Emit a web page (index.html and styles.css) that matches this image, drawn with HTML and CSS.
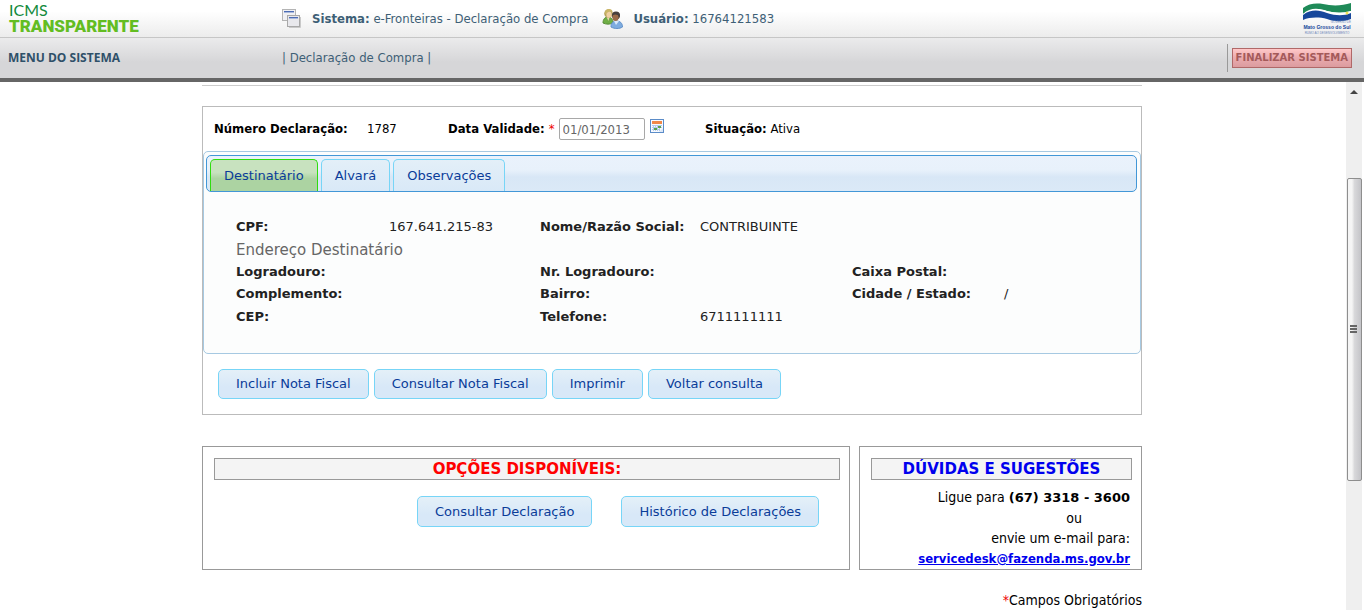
FILE: index.html
```html
<!DOCTYPE html>
<html lang="pt-BR">
<head>
<meta charset="utf-8">
<title>ICMS Transparente - Declaração de Compra</title>
<link rel="stylesheet" href="styles.css">
</head>
<body>
<header class="top">
  <div class="logo"><span class="logo-small">ICMS</span><span class="logo-big">TRANSPARENTE</span></div>
  <div class="session">
    <svg class="icon-windows" width="20" height="20" viewBox="0 0 20 20" aria-hidden="true">
      <rect x="1.500" y=".5" width="13" height="11" fill="#f0f0f3" stroke="#b4b4b4"/>
      <rect x="3" y="2" width="10" height="1" fill="#4c6cb4"/><rect x="3" y="3" width="10" height="1" fill="#a9b9dc"/>
      <path d="M19.500 8v10.500H8" stroke="#c9c9c9" fill="none"/>
      <rect x="6.500" y="6.500" width="12" height="11" fill="#e8e8ec" stroke="#a8a8a8"/>
      <rect x="8" y="8" width="9" height="1" fill="#4c6cb4"/><rect x="8" y="9" width="9" height="1" fill="#a9b9dc"/>
    </svg>
    <span class="session-item"><b>Sistema:</b> e-Fronteiras - Declaração de Compra</span>
    <svg class="icon-users" width="22" height="22" viewBox="0 0 22 22" aria-hidden="true">
      <path d="M1 15c0-4 2-6 5-6s5 2 5 6c-3 1.500-7 1.500-10 0z" fill="#6fae45" stroke="#568c36"/>
      <path d="M4.500 9h3l-1 4z" fill="#e9d3b0"/>
      <circle cx="6.500" cy="5.500" r="4.300" fill="#b7a35c"/>
      <ellipse cx="7" cy="6.500" rx="2.600" ry="3.300" fill="#f0cfa4"/>
      <path d="M3 6c0-4 2-5 4-5s3.500 1 3.500 3C8 3 6 4 5 5z" fill="#cbb667"/>
      <path d="M9 19c0-4 2-6 5.500-6s6 2 6 6c-3 2-8 2-11.500 0z" fill="#7eacdf" stroke="#6292ca"/>
      <path d="M12 13h5l-3 4z" fill="#d9e9fa"/>
      <circle cx="14" cy="7.500" r="4" fill="#4f4037"/>
      <ellipse cx="13.500" cy="9.500" rx="3" ry="3.500" fill="#9a6a48"/>
      <path d="M10 7c1-4 7-4 8 0v2c-2-3-5-3-8-2z" fill="#46403f"/>
    </svg>
    <span class="session-item"><b>Usuário:</b> 16764121583</span>
  </div>
  <svg class="state-logo" width="50" height="32" viewBox="0 0 50 32" role="img" aria-label="Governo de Mato Grosso do Sul">
    <path d="M1 5C8-1 18 0 27 2c8 1 15 0 22-2v8c-8 3-16 2-24 0C16 5 8 6 1 11z" fill="#1f8a58"/>
    <path d="M1 11c7-7 16-6 24-3 8 2 16 2 24 0v2c-8 3-16 3-24 0-8-3-17-3-24 3z" fill="#fff"/>
    <path d="M1 12c8-6 16-5 24-2 9 3 17 3 24 0v6c-8 3-16 3-24 0-8-2-17-2-24 1z" fill="#17479b"/>
    <circle cx="45" cy="10" r="1.500" fill="#f2e255"/>
    <text x="49" y="20" class="state-tiny" text-anchor="end">GOVERNO DE</text>
    <text x="25" y="26" class="state-name" text-anchor="middle">Mato Grosso do Sul</text>
    <text x="25" y="31" class="state-tiny" text-anchor="middle">RUMO AO DESENVOLVIMENTO</text>
  </svg>
</header>
<nav class="menu">
  <b class="menu-title">MENU DO SISTEMA</b>
  <span class="crumbs">| <a href="#declaracao">Declaração de Compra</a> |</span>
  <div class="exit"><button class="exit-button" type="button">FINALIZAR SISTEMA</button></div>
</nav>
<div class="viewport">
  <main class="page" id="declaracao">
    <section class="panel">
      <div class="summary">
        <b>Número Declaração:</b><span>1787</span>
        <div class="validity"><label for="validade">Data Validade:</label><span class="required">*</span>
          <input id="validade" class="date" type="text" value="01/01/2013">
          <button class="calendar" type="button" aria-label="Abrir calendário">
            <svg width="14" height="14" viewBox="0 0 14 14" aria-hidden="true">
              <rect x=".5" y=".5" width="13" height="13" fill="#f7faff" stroke="#5b8cc8"/>
              <rect x="2" y="2" width="10" height="3" fill="#f08848"/>
              <path d="M2 6.500h10M2 8.500h10M2 10.500h7M3.500 6v6M5.500 6v6M7.500 6v6M9.500 6v6" stroke="#b3caea" fill="none"/>
              <path d="M8 7h3v2H8zM4 9h3v2H4z" fill="#5aa34c"/>
              <path d="M9 13l4-4v4z" fill="#dbe7f7"/>
            </svg>
          </button>
        </div>
        <div><b>Situação:</b> Ativa</div>
      </div>
      <div class="tabs">
        <div class="tab-bar" role="tablist">
          <button class="tab tab-active" type="button" role="tab" aria-selected="true">Destinatário</button>
          <button class="tab" type="button" role="tab" aria-selected="false">Alvará</button>
          <button class="tab" type="button" role="tab" aria-selected="false">Observações</button>
        </div>
        <div class="fields">
          <b>CPF:</b><span>167.641.215-83</span><b>Nome/Razão Social:</b><span class="wide">CONTRIBUINTE</span>
          <h2 class="fields-heading">Endereço Destinatário</h2>
          <b>Logradouro:</b><span></span><b>Nr. Logradouro:</b><span></span><b>Caixa Postal:</b><span></span>
          <b>Complemento:</b><span></span><b>Bairro:</b><span></span><b>Cidade / Estado:</b><span>/</span>
          <b>CEP:</b><span></span><b>Telefone:</b><span class="wide">6711111111</span>
        </div>
      </div>
      <div class="actions">
        <button class="button" type="button">Incluir Nota Fiscal</button>
        <button class="button" type="button">Consultar Nota Fiscal</button>
        <button class="button" type="button">Imprimir</button>
        <button class="button" type="button">Voltar consulta</button>
      </div>
    </section>
    <div class="bottom">
      <section class="box">
        <h2 class="box-title options-title">OPÇÕES DISPONÍVEIS:</h2>
        <div class="options">
          <button class="button" type="button">Consultar Declaração</button>
          <button class="button" type="button">Histórico de Declarações</button>
        </div>
      </section>
      <section class="box">
        <h2 class="box-title help-title">DÚVIDAS E SUGESTÕES</h2>
        <div class="help">
          <p>Ligue para <b class="phone">(67) 3318 - 3600</b></p>
          <p class="or">ou</p>
          <p>envie um e-mail para:</p>
          <p><a class="mail" href="mailto:servicedesk@fazenda.ms.gov.br">servicedesk@fazenda.ms.gov.br</a></p>
        </div>
      </section>
    </div>
    <p class="note"><span class="required">*</span>Campos Obrigatórios</p>
  </main>
  <div class="scroll" aria-hidden="true">
    <svg class="arrow" width="8" height="4" viewBox="0 0 8 4"><path d="M0 4l4-4 4 4z" fill="#444"/></svg>
    <div class="thumb"><svg width="8" height="9" viewBox="0 0 8 9"><path d="M0 1h7M0 4h7M0 7h7" stroke="#666" stroke-width="2"/></svg></div>
  </div>
</div>
</body>
</html>
```
FILE: styles.css
```css
* { box-sizing: border-box; }
body {
  margin: 0;
  min-height: 100vh;
  display: flex;
  flex-direction: column;
  background: #fff;
  color: #000;
  font: 13px/20px "DejaVu Sans Condensed", "DejaVu Sans", Verdana, sans-serif;
}
button, input { font: inherit; margin: 0; }
p, h2 { margin: 0; }

.top {
  display: grid;
  grid-template-columns: 281px 1fr auto;
  height: 38px;
  padding-right: 12px;
  border-bottom: 1px solid #c6c6c6;
  background: linear-gradient(#fff 30%, #ececec);
  color: #3e5f76;
}
.logo { display: flex; flex-direction: column; padding: 3px 0 0 9px; }
.logo-small { font: 16px/14px Lato, sans-serif; color: #128a3c; }
.logo-big { font: 900 17px/18px Roboto, sans-serif; color: #63bd22; }
.session { display: flex; align-items: center; }
.session-item { white-space: nowrap; }
.icon-windows { margin-right: 11px; }
.icon-users { margin: 0 9px 0 14px; }
.state-logo { margin-top: 3px; }
.state-name { font: bold 5px "Liberation Sans", sans-serif; fill: #17479b; }
.state-tiny { font: 3px "Liberation Sans", sans-serif; fill: #6d86b8; }

.menu {
  display: grid;
  grid-template-columns: 274px 1fr auto;
  align-items: center;
  height: 44px;
  padding: 0 12px 0 8px;
  border-bottom: 4px solid #666;
  background: linear-gradient(#ebebec, #d6d6d8 60%);
  color: #3e5f76;
}
.menu-title { font: bold 12px/20px "Open Sans", sans-serif; color: #2f5069; }
.crumbs a { color: inherit; text-decoration: none; }
.exit { padding: 4px 0 4px 4px; border-left: 1px solid #999; }
.exit-button {
  display: block;
  height: 20px;
  padding: 0 3px;
  border: 1px solid #b06868;
  background: linear-gradient(#ffc8c8, #e9aaae 50%, #dc9c9f);
  color: #a45a5a;
  font: bold 10px/18px "DejaVu Sans", Verdana, sans-serif;
  white-space: nowrap;
}

.viewport { flex: 1; display: grid; grid-template-columns: 1fr 20px; }
.page { width: 100%; max-width: 940px; margin: 3px auto 0; border-top: 1px solid #ccc; }
.panel { margin-top: 20px; padding-bottom: 15px; border: 1px solid #bbb; }
.summary {
  display: grid;
  grid-template-columns: 153px 81px 257px 1fr;
  align-items: center;
  height: 44px;
  padding-left: 11px;
}
.validity { display: flex; align-items: center; }
.validity label { font-weight: bold; }
.required { color: #e00; }
.validity .required { margin: 0 4px; }
.date { width: 86px; height: 22px; padding: 0 3px; border: 1px solid #a8a8a8; border-radius: 2px; background: #fff; color: #666; }
.calendar { display: flex; margin: 0 0 6px 5px; padding: 0; border: 0; background: none; }

.tabs, .button, .options-title, .help-title, .phone { font-family: "DejaVu Sans", Verdana, sans-serif; }
.tabs { padding: 3px 3px 25px 2px; border: 1px solid #a6c9e2; border-radius: 5px; background: #fcfdfd; }
.tab-bar {
  display: flex;
  align-items: flex-end;
  gap: 3px;
  height: 37px;
  padding-left: 3px;
  border: 1px solid #4297d7;
  border-radius: 5px;
  background: linear-gradient(#eaf2fc, #e8f1fb 40%, #d8e7f6 60%, #dbe9f7);
}
.tab {
  height: 32px;
  padding: 0 13px;
  border: 1px solid #77d5f7;
  border-bottom: 0;
  border-radius: 5px 5px 0 0;
  background: linear-gradient(#e3eff8, #d9e9f7);
  color: #0a3c99;
}
.tab-active { border-color: #2fdc0f; background: linear-gradient(#c8e2bf 40%, #acd3a2 60%); }
.fields {
  display: grid;
  grid-template-columns: 153px 151px 160px 152px 152px 1fr;
  grid-template-rows: 22px 23px 22px 22px 23px;
  align-items: center;
  padding: 24px 0 0 30px;
  color: #222;
}
.fields b { white-space: nowrap; }
.fields .wide { grid-column: span 3; }
.fields-heading { grid-column: 1 / -1; color: #666; font-size: 15px; font-weight: normal; }

.actions { display: flex; gap: 5px; padding: 15px 0 0 15px; }
.button {
  height: 30px;
  padding: 0 17px;
  border: 1px solid #77d5f7;
  border-radius: 5px;
  background: linear-gradient(#e4f0f8, #d8e8f8 60%);
  color: #0a3c99;
  white-space: nowrap;
}

.bottom { display: grid; grid-template-columns: 648fr 283fr; gap: 9px; margin-top: 31px; }
.box { min-height: 124px; padding: 11px 9px 0 11px; border: 1px solid #999; }
.box-title { height: 22px; border: 1px solid #999; background: #f4f4f4; font-size: 15px; line-height: 20px; font-weight: bold; text-align: center; }
.options-title { color: #f00; }
.help-title { color: #00e; }
.options { display: flex; justify-content: center; gap: 29px; padding: 16px 0 0 182px; }
.options .button { height: 31px; }
.help { padding: 7px 2px 0 0; font-size: 14px; text-align: right; }
.phone, .mail { font-size: 13px; }
.or { padding-right: 48px; }
.mail { color: #00e; font-weight: bold; }
.note { padding-top: 20px; font-size: 14px; text-align: right; }

.scroll { display: flex; flex-direction: column; align-items: center; width: 16px; margin: 0 2px; background: #efefef; }
.arrow { margin-top: 8px; }
.thumb {
  display: flex;
  align-items: center;
  justify-content: center;
  width: 15px;
  height: 303px;
  margin-top: 84px;
  border: 1px solid #8e8e8e;
  border-radius: 2px;
  background: linear-gradient(90deg, #f5f5f5 30%, #d8d8da 50%, #c4c4c8);
}
```
